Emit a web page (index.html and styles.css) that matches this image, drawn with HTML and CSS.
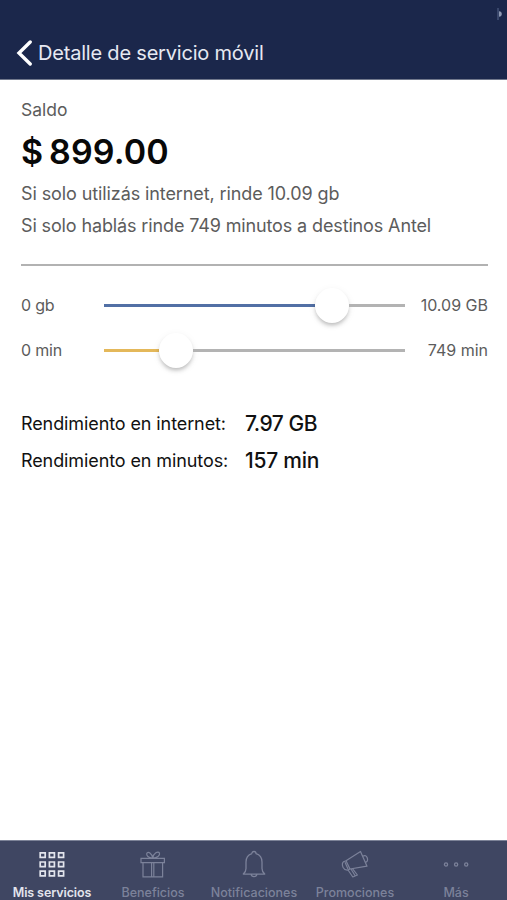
FILE: index.html
```html
<!DOCTYPE html>
<html lang="es">
<head>
<meta charset="utf-8">
<meta name="viewport" content="width=device-width">
<title>Detalle de servicio móvil</title>
<link rel="stylesheet" href="styles.css">
</head>
<body>
<header class="header">
  <div class="status"><svg width="6" height="14" viewBox="0 0 6 14"><path d="M1 1V13" stroke="#46557a" stroke-width="1.4"/><path d="M2 4.2Q4.8 4.5 4.8 7T2 9.8Z" fill="#8e99b3"/></svg></div>
  <div class="nav">
    <svg class="back" width="17" height="28" viewBox="0 0 17 28"><path d="M15.2 3 4 14 15.2 25" fill="none" stroke="#fff" stroke-width="3.4" stroke-linecap="round"/></svg>
    <h1 class="title">Detalle de servicio móvil</h1>
  </div>
</header>
<main class="main">
  <p class="label">Saldo</p>
  <p class="balance">$ 899.00</p>
  <p class="note note-data">Si solo utilizás internet, rinde 10.09 gb</p>
  <p class="note note-talk">Si solo hablás rinde 749 minutos a destinos Antel</p>
  <hr class="rule">
  <div class="sliders">
    <div class="slider"><span class="min">0 gb</span><div class="track data"><i class="fill"></i><i class="thumb"></i><i class="rest"></i></div><span class="max">10.09 GB</span></div>
    <div class="slider"><span class="min">0 min</span><div class="track talk"><i class="fill"></i><i class="thumb"></i><i class="rest"></i></div><span class="max">749 min</span></div>
  </div>
  <dl class="yield">
    <dt>Rendimiento en internet:</dt><dd>7.97 GB</dd>
    <dt>Rendimiento en minutos:</dt><dd class="minutes">157 min</dd>
  </dl>
</main>
<nav class="tabs">
  <a class="tab active"><svg width="30" height="30" viewBox="0 0 30 30"><g fill="none" stroke="currentColor" stroke-width="1.7"><path d="M3.2 2.8h5v4.6h-5zM12.4 2.8h5v4.6h-5zM21.6 2.8h5v4.6h-5zM3.2 12h5v4.6h-5zM12.4 12h5v4.6h-5zM21.6 12h5v4.6h-5zM3.2 21.2h5v4.6h-5zM12.4 21.2h5v4.6h-5zM21.6 21.2h5v4.6h-5z"/></g></svg><span>Mis servicios</span></a>
  <a class="tab"><svg width="30" height="30" viewBox="0 0 30 30"><g fill="none" stroke="currentColor" stroke-width="1.2"><path d="M3 8.3h23.4v4.4H3zM5 12.7h19.6v14.2H5zM13.6 12.7v14.2M15.8 12.7v14.2M14.5 8C10.5 7.6 8 5.8 8.8 3.3 10 .8 14 3.3 14.7 8 15.5 3.3 20 .6 21.5 3.1 22.3 5.6 19 7.8 14.7 8"/></g></svg><span>Beneficios</span></a>
  <a class="tab"><svg width="30" height="30" viewBox="0 0 30 30"><g fill="none" stroke="currentColor" stroke-width="1.3" stroke-linejoin="round"><path d="M13 3.6Q13 1.5 15 1.5T17 3.6C21 4.8 23 8 23 12v6.5c0 2.7 1.2 4.3 2.7 5.6H4.3c1.5-1.3 2.7-2.9 2.7-5.6V12c0-4 2-7.2 6-8.4M12 24.1q.5 2.5 3 2.5T18 24.1"/></g></svg><span>Notificaciones</span></a>
  <a class="tab"><svg width="30" height="30" viewBox="0 0 30 30"><g fill="none" stroke="currentColor" stroke-width="1.2" stroke-linejoin="round"><path d="M20.5 1.5 27 16.2 10 19 6 10.7ZM6 10.7 3.5 11.8Q1.5 13.6 3 17.2 4.4 20 7.2 20.2L10 19M5 12.3 8 19M22.7 6.2Q26.2 4.5 27.3 8T25.5 12.4M8 20 12.8 27 17.4 25 12.5 18.7M11 19 15.3 26"/></g></svg><span>Promociones</span></a>
  <a class="tab"><svg width="30" height="30" viewBox="0 0 30 30"><g fill="none" stroke="currentColor" stroke-width="1.3"><circle cx="5" cy="14.5" r="1.6"/><circle cx="15.1" cy="14.5" r="1.6"/><circle cx="25.2" cy="14.5" r="1.6"/></g></svg><span>Más</span></a>
</nav>
</body>
</html>
```
FILE: styles.css
```css
* { box-sizing: border-box; }
body {
  margin: 0;
  height: 900px;
  display: flex;
  flex-direction: column;
  background: #fff;
  font-family: Inter, "Liberation Sans", sans-serif;
  overflow: hidden;
}
p, h1, dl, dd { margin: 0; }
svg { display: block; flex: none; }

.header {
  height: 80px;
  background: #1b274b;
  border-bottom: 1px solid #71788c;
}
.status {
  height: 38px;
  padding: 7px 4px 0 0;
  display: flex;
  justify-content: flex-end;
}
.nav {
  display: flex;
  align-items: center;
  height: 29px;
  padding-left: 15px;
}
.title {
  margin-left: 6px;
  font-size: 20px;
  line-height: 28px;
  font-weight: 400;
  letter-spacing: -0.2px;
  color: #e6e9f2;
  white-space: nowrap;
}

.main {
  flex: 1;
  padding: 18px 19px 0 21px;
  color: #5c5c5c;
  white-space: nowrap;
}
.label { font-size: 17.5px; line-height: 24px; }
.balance {
  margin-top: 9px;
  font-size: 34px;
  line-height: 42px;
  font-weight: 600;
  letter-spacing: 0.15px;
  word-spacing: -3px;
  color: #080808;
}
.note { font-size: 18px; line-height: 32px; }
.note-data { margin-top: 5px; letter-spacing: -0.1px; }
.note-talk { letter-spacing: -0.13px; }
.rule {
  height: 2px;
  margin: 22px 0 0;
  border: 0;
  background: #b2b2b2;
}
.sliders { margin-top: 16px; }
.slider {
  display: flex;
  align-items: center;
  height: 45px;
  font-size: 16px;
}
.min { width: 83px; letter-spacing: -0.2px; }
.track {
  width: 301px;
  height: 37px;
  padding-top: 2px;
  display: flex;
  align-items: center;
}
.fill { height: 3px; }
.rest { height: 3px; flex: 1; background: #b3b3b3; }
.data .fill { width: 211px; background: #5270a5; }
.talk .fill { width: 55px; background: #e4b85a; }
.thumb {
  width: 34px;
  height: 35px;
  border-radius: 50%;
  background: #fff;
  box-shadow: 0 3px 4px -1px rgba(0, 0, 0, .25), 0 2px 9px rgba(0, 0, 0, .06);
}
.max { flex: 1; text-align: right; }

.yield {
  margin-top: 33px;
  display: grid;
  grid-template-columns: 224px 1fr;
  grid-auto-rows: 37px;
  align-items: center;
  color: #111;
}
.yield dt { font-size: 18px; letter-spacing: -0.1px; }
.yield dd { font-size: 21px; font-weight: 500; letter-spacing: -0.5px; }
.yield .minutes { letter-spacing: -0.25px; }

.tabs {
  height: 60px;
  display: grid;
  grid-template-columns: repeat(5, 101px);
  padding: 9px 0 0 1px;
  border-top: 1px solid #7d8398;
  background: #3f4662;
}
.tab {
  display: flex;
  flex-direction: column;
  align-items: center;
  color: #7c829a;
  font-size: 12.5px;
  line-height: 18px;
  font-weight: 500;
  white-space: nowrap;
}
.tab span { margin: 4px 0 0 1px; }
.active { color: #e3e5ed; font-weight: 600; letter-spacing: -0.1px; }
```
